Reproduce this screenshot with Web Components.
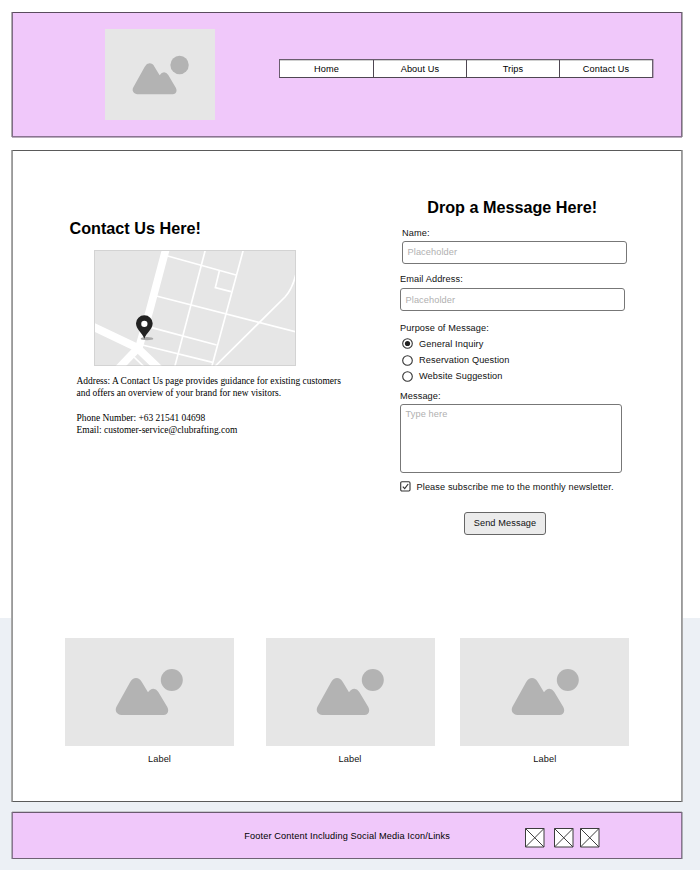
<!DOCTYPE html>
<html lang="en">
<head>
<meta charset="utf-8">
<title>Contact Us</title>
<style>
body{margin:0;width:700px;height:870px;box-sizing:border-box;padding:12px 18px 0 12px;overflow:hidden;
 font:9.2px/12px "Liberation Sans",Arial,sans-serif;letter-spacing:.11px;color:#111;
 background:linear-gradient(#fff 618px,#ecf0f5 618px)}
</style>
</head>
<body>
<contact-page></contact-page>
<script>
function define(name, html){
  const t=document.createElement('template');
  t.innerHTML=html;
  customElements.define(name,class extends HTMLElement{
    constructor(){
      super();
      this.attachShadow({mode:'open'}).append(t.content.cloneNode(true));
    }
  });
}

/* outlined section */
define('wf-frame',`<style>
:host{display:block;box-sizing:border-box;border:1px solid #5a535c}
</style><slot></slot>`);

define('wf-heading',`<style>
:host{display:block}
h2{margin:0;font:bold 16.2px/20px "Liberation Sans",Arial,sans-serif;letter-spacing:0;color:#000;white-space:nowrap}
</style><h2><slot></slot></h2>`);

/* image placeholder: mountains and sun */
define('wf-picture',`<style>
:host{display:block;background:#e6e6e6;box-sizing:border-box}
svg{display:block;width:var(--icon-w,69px);height:var(--icon-h,48px)}
</style>
<svg viewBox="0 0 69 48" fill="#b3b3b3"><circle cx="56.8" cy="12" r="11"/>
<path d="M1.6 38.5L15.2 13.9Q17.6 10 21 10Q24.500 10 26.8 13.9L33 24.2Q35.3 20.7 38.3 20.7Q41.2 20.7 43.300 24L52.3 39C54.5 43.5 52.5 47 48.3 47H8C2 47-.8 43 1.6 38.5Z"/></svg>`);

define('wf-nav',`<style>
:host{display:block}
nav{box-sizing:border-box;display:grid;grid-template:17px/93px 92px 92px 92px;gap:1px;width:374px;background:#4e4651;border:1px solid #6a5d6e;border-bottom-color:#4e4651;height:19px;box-shadow:1px 0 #b9a2bf}
</style><nav><slot></slot></nav>`);
define('wf-nav-item',`<style>
:host{display:block;height:17px;background:#fff;text-align:center;line-height:18px;color:#000;box-shadow:inset 0 1px #d0d0d0}
</style><slot></slot>`);

define('wf-header',`<style>
:host{display:block}
wf-frame{display:flex;height:125px;background:#f0c8fa;border-color:#5a4c5e #806b86 #8a7491;box-shadow:1px 0 #adadad,-1px 0 #adadad,0 1px #b9adbc}
wf-picture{width:110.4px;height:90.6px;margin:16.4px 0 0 92px;padding:25.6px 0 0 26.6px;--icon-w:57.8px;--icon-h:40.2px}
wf-nav{margin:46px 0 0 63.6px}
</style>
<wf-frame><wf-picture></wf-picture><wf-nav>
<wf-nav-item>Home</wf-nav-item><wf-nav-item>About Us</wf-nav-item><wf-nav-item>Trips</wf-nav-item><wf-nav-item>Contact Us</wf-nav-item>
</wf-nav></wf-frame>`);

define('wf-map',`<style>
:host{display:block;width:202px;height:116px}
svg{display:block}
</style>
<svg width="202" height="116" viewBox="117 119 606 348">
<rect x="118.500" y="120.500" width="603" height="345" fill="#e6e6e6" stroke="#d3d3d3" stroke-width="3"/>
<svg x="120" y="122" width="600" height="343" viewBox="120 122 600 343">
<g fill="none" stroke="#fff">
<path stroke-width="23" d="M333 115L284 300L250 418"/>
<path stroke-width="24" d="M112 348L246 412L312 475"/>
<path stroke-width="23" d="M250 412L190 475"/>
<path stroke-width="5" d="M452 115L359 470M566 115L470 470"/>
<path stroke-width="5" d="M338 137L543 194M493 182L481 232L528 244M304 257L725 365M290 352L485 404M262 404L473 456M237 440L268 470"/>
<path stroke-width="5" d="M478 470L690 260Q712 236 722 194"/>
</g></svg>
<ellipse cx="276" cy="385" rx="19" ry="5" fill="#a8a8a8"/>
<path fill="#222" fill-rule="evenodd" d="M268 385C260 366 243 356 243 339A25 24 0 0 1 293 339C293 356 276 366 268 385ZM268 331A9.500 9.500 0 1 0 268 350A9.500 9.500 0 1 0 268 331Z"/>
</svg>`);

define('wf-contact',`<style>
:host{display:block}
wf-heading{margin:67px 0 0 56.5px}
wf-map{margin:12px 0 9px 81px}
p{margin:0 0 12.250px 63.500px;font:9.46px/12.250px "Liberation Serif","Times New Roman",serif;letter-spacing:0;color:#000;white-space:nowrap}
</style>
<wf-heading>Contact Us Here!</wf-heading><wf-map></wf-map>
<p>Address: A Contact Us page provides guidance for existing customers<br>and offers an overview of your brand for new visitors.</p>
<p>Phone Number: +63 21541 04698<br>Email: customer-service@clubrafting.com</p>`);

define('wf-field',`<style>
:host{display:block}
.box{box-sizing:border-box;width:var(--w,225px);height:var(--h,23px);margin-top:var(--gap,2px);padding:var(--pad,4px) 4.5px 0;border:1px solid #777;border-radius:3px;background:#fff;color:#b0b0b0}
</style><slot name="label"></slot><div class="box"><slot></slot></div>`);

define('wf-radio',`<style>
:host{display:flex;align-items:center;gap:6px;height:16.200px}
svg{display:block;width:11px;height:11px;margin-top:.5px}
circle.dot{display:none}
:host([checked]) circle.dot{display:block}
</style><svg viewBox="0 0 11 11"><circle cx="5.500" cy="5.500" r="4.800" fill="#fff" stroke="#333" stroke-width="1.100"/><circle class="dot" cx="5.500" cy="5.500" r="2.600" fill="#222"/></svg><span><slot></slot></span>`);

define('wf-check',`<style>
:host{display:flex;align-items:center;gap:6px;white-space:nowrap}
svg{display:block;width:11px;height:11px;margin-top:-1px}
</style><svg viewBox="0 0 11 11" fill="none" stroke="#333"><rect x=".7" y=".7" width="9.300" height="9.300" rx="1.200" fill="#fff" stroke-width="1.100"/><path d="M2.800 5.600L4.700 7.600L8.200 3" stroke-width="1.200"/></svg><span><slot></slot></span>`);

define('wf-button',`<style>
:host{display:block}
button{display:block;box-sizing:border-box;width:82px;height:23px;padding:0 0 2px;border:1px solid #666;border-radius:3px;background:#ebebeb;font:inherit;letter-spacing:inherit;color:#111}
</style><button><slot></slot></button>`);

define('wf-form',`<style>
:host{display:block}
wf-heading{margin:46px 0 0 37.2px}
.name{margin:10px 0 0 12px}
.email{margin:9px 0 0 10px;--gap:3px;--pad:5px}
.purpose{margin:11px 0 1.500px 10px}
wf-radio{margin-left:12px}
.message{margin:6px 0 0 10px;--w:222px;--h:69px;--pad:3px}
wf-check{margin:8px 0 0 9.500px}
wf-button{margin:19px 0 0 74px}
</style>
<wf-heading>Drop a Message Here!</wf-heading>
<wf-field class="name"><span slot="label">Name:</span>Placeholder</wf-field>
<wf-field class="email"><span slot="label">Email Address:</span>Placeholder</wf-field>
<div class="purpose">Purpose of Message:</div>
<wf-radio checked>General Inquiry</wf-radio><wf-radio>Reservation Question</wf-radio><wf-radio>Website Suggestion</wf-radio>
<wf-field class="message"><span slot="label">Message:</span>Type here</wf-field>
<wf-check>Please subscribe me to the monthly newsletter.</wf-check>
<wf-button>Send Message</wf-button>`);

define('wf-card',`<style>
:host{display:block;width:169px}
wf-picture{height:108px;padding:30px 0 0 var(--icon-x,50.700px)}
div{text-align:center;margin-top:7px;padding-left:var(--shift,0)}
</style><wf-picture></wf-picture><div><slot></slot></div>`);

define('wf-main',`<style>
:host{display:block}
wf-frame{height:652px;margin-top:13px;background:#fff;border-color:#5a5a5a #999;box-shadow:1px 0 #a8a8a8,-1px 0 #a8a8a8}
.columns{display:grid;grid-template-columns:377px 291px;height:487px}
.gallery{display:flex;padding-left:52px}
wf-card + wf-card{margin-left:31.500px}
wf-card + wf-card + wf-card{margin-left:25.800px}
</style>
<wf-frame><div class="columns"><wf-contact></wf-contact><wf-form></wf-form></div>
<div class="gallery"><wf-card style="--shift:20px;--icon-x:50px">Label</wf-card><wf-card>Label</wf-card><wf-card>Label</wf-card></div></wf-frame>`);

define('wf-social',`<style>
:host{display:block;width:20px;height:20px}
svg{display:block}
</style><svg width="20" height="20" viewBox="0 0 20 20" fill="#fff" stroke="#3d3d3d"><path d="M.5.5H19V19H.5ZL19 19M19 .5L.5 19"/></svg>`);

define('wf-footer',`<style>
:host{display:block}
wf-frame{display:flex;height:47px;margin-top:10px;background:#f0c8fa;border-color:#6a5a6f #8a7491 #6f6274;box-shadow:1px 0 #adb0b5,-1px 0 #adb0b5,0 -1px #c8cacd}
.text{width:281px;margin:17px 0 0 231.3px;letter-spacing:.125px;color:#000;white-space:nowrap}
wf-social{margin-top:15px}
wf-social + wf-social{margin-left:8.700px}
wf-social + wf-social + wf-social{margin-left:6.300px}
</style>
<wf-frame><div class="text">Footer Content Including Social Media Icon/Links</div><wf-social></wf-social><wf-social></wf-social><wf-social></wf-social></wf-frame>`);

define('contact-page',`<style>:host{display:block}</style><wf-header></wf-header><wf-main></wf-main><wf-footer></wf-footer>`);
</script>
</body>
</html>
